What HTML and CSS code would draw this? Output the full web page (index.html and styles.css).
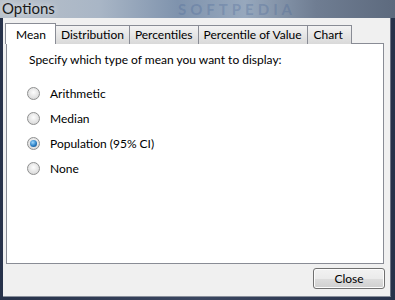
FILE: index.html
```html
<!DOCTYPE html>
<html lang="en">
<head>
    <meta charset="UTF-8">
    <title>Options</title>
    <link rel="stylesheet" href="styles.css">
</head>
<body>
    <div class="window">
        <div class="titlebar">
            <span class="title">Options</span>
            <span class="watermark">SOFTPEDIA</span>
        </div>
        <div class="client">
            <div class="tabs">
                <div class="tab active">Mean</div>
                <div class="tab">Distribution</div>
                <div class="tab">Percentiles</div>
                <div class="tab">Percentile of Value</div>
                <div class="tab">Chart</div>
            </div>
            <div class="panel">
                <p class="prompt">Specify which type of mean you want to display:</p>
                <div class="options">
                    <label class="option"><span class="radio"></span>Arithmetic</label>
                    <label class="option"><span class="radio"></span>Median</label>
                    <label class="option"><span class="radio checked"></span>Population (95% CI)</label>
                    <label class="option"><span class="radio"></span>None</label>
                </div>
            </div>
            <div class="footer">
                <button class="btn">Close</button>
            </div>
        </div>
    </div>
</body>
</html>
```

FILE: styles.css
```css
* {
    margin: 0;
    padding: 0;
    box-sizing: border-box;
}

body {
    font-family: Lato, "Liberation Sans", sans-serif;
    font-size: 12px;
    color: #000;
    background: #2a3550;
    width: 395px;
    height: 300px;
    overflow: hidden;
}

.window {
    width: 395px;
    height: 300px;
    display: flex;
    flex-direction: column;
    background: linear-gradient(90deg, #27324a 0, #3a4660 50%, #27324a 100%);
}

/* aero glass title bar */
.titlebar {
    height: 18px;
    position: relative;
    overflow: hidden;
    background: linear-gradient(90deg, #b9c1ca 0, #a9b6c6 25%, #7f93ad 45%, #97a8bd 62%, #6f7d92 80%, #5d6a7e 100%);
}

.title {
    position: absolute;
    left: 2px;
    top: 0;
    font-size: 15px;
    line-height: 17px;
    color: #1a1a1a;
    text-shadow: 0 0 6px rgba(255, 255, 255, 0.8);
}

.watermark {
    position: absolute;
    left: 178px;
    top: 1px;
    font-size: 15px;
    line-height: 16px;
    font-weight: bold;
    letter-spacing: 4px;
    color: rgba(70, 100, 150, 0.3);
}

.client {
    flex: 1;
    margin: 0 4px 3px 3px;
    background: #f0f0f0;
    border-right: 1px solid #6c7384;
    border-bottom: 1px solid #8a909c;
    display: flex;
    flex-direction: column;
    padding: 0 6px 0 3px;
}

.tabs {
    display: flex;
    height: 25px;
    align-items: flex-end;
    position: relative;
    z-index: 1;
}

.tab {
    height: 19px;
    padding: 0 5px;
    border: 1px solid #898c95;
    border-bottom: none;
    border-left: none;
    background: linear-gradient(#f3f3f3, #e6e6e6 50%, #d9d9d9);
    line-height: 18px;
    margin-bottom: -1px;
}

.tab:last-child {
    padding: 0 8px 0 6px;
}

.tab.active {
    height: 21px;
    background: #fff;
    border-left: 1px solid #898c95;
    padding: 0 9px 0 10px;
    margin-left: -1px;
    line-height: 21px;
}

.panel {
    height: 221px;
    background: #fff;
    border: 1px solid #898c95;
    padding: 8px 0 0 22px;
}

.prompt {
    line-height: 16px;
}

.options {
    display: flex;
    flex-direction: column;
    gap: 8px;
    margin-top: 17px;
}

.option {
    display: flex;
    align-items: center;
    height: 17px;
}

.radio {
    width: 13px;
    height: 13px;
    border-radius: 50%;
    border: 1px solid #8e8f8f;
    background: radial-gradient(circle at 50% 40%, #fdfdfd 0, #e2e2e2 60%, #cfcfcf 100%);
    margin: 0 10px 0 -2px;
    position: relative;
}

.radio.checked::after {
    content: "";
    position: absolute;
    left: 2px;
    top: 2px;
    width: 7px;
    height: 7px;
    border-radius: 50%;
    background: radial-gradient(circle at 40% 35%, #9fd8ff 0, #2a7fc4 55%, #0e3c73 100%);
}

.footer {
    flex: 1;
    display: flex;
    justify-content: flex-end;
    align-items: flex-start;
    padding-top: 4px;
}

.btn {
    width: 72px;
    height: 21px;
    font-family: inherit;
    font-size: 12px;
    border: 1px solid #707070;
    border-radius: 3px;
    background: linear-gradient(#f2f2f2, #ebebeb 50%, #dddddd 51%, #cfcfcf);
    box-shadow: inset 0 0 0 1px #fcfcfc;
    margin-right: -1px;
}
```
